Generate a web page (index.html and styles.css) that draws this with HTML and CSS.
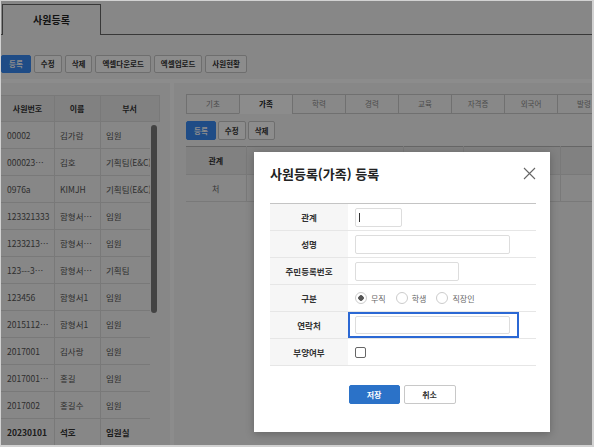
FILE: index.html
```html
<!DOCTYPE html>
<html lang="ko">
<head>
    <meta charset="UTF-8">
    <meta name="viewport" content="width=device-width, initial-scale=1.0">
    <title>사원등록</title>
    <link rel="stylesheet" href="styles.css">
</head>
<body>
    <div class="page-tabs">
        <div class="page-tab">사원등록</div>
    </div>

    <div class="toolbar">
        <button class="btn btn-primary">등록</button>
        <button class="btn">수정</button>
        <button class="btn">삭제</button>
        <button class="btn">엑셀다운로드</button>
        <button class="btn">엑셀업로드</button>
        <button class="btn">사원현황</button>
    </div>

    <div class="main">
        <!-- 사원 목록 -->
        <div class="emp-list">
            <div class="grid-head">
                <div class="gcell c-no">사원번호</div>
                <div class="gcell c-name">이름</div>
                <div class="gcell c-dept">부서</div>
            </div>
            <div class="grid-body">
                <div class="rows">
                    <div class="grow"><div class="gcell c-no">00002</div><div class="gcell c-name">김가람</div><div class="gcell c-dept">임원</div></div>
                    <div class="grow"><div class="gcell c-no">000023…</div><div class="gcell c-name">김호</div><div class="gcell c-dept">기획팀(E&amp;C)</div></div>
                    <div class="grow"><div class="gcell c-no">0976a</div><div class="gcell c-name">KIMJH</div><div class="gcell c-dept">기획팀(E&amp;C)</div></div>
                    <div class="grow"><div class="gcell c-no">123321333</div><div class="gcell c-name">함형서…</div><div class="gcell c-dept">임원</div></div>
                    <div class="grow"><div class="gcell c-no">1233213…</div><div class="gcell c-name">함형서…</div><div class="gcell c-dept">임원</div></div>
                    <div class="grow"><div class="gcell c-no">123---3…</div><div class="gcell c-name">함형서…</div><div class="gcell c-dept">기획팀</div></div>
                    <div class="grow"><div class="gcell c-no">123456</div><div class="gcell c-name">함형서1</div><div class="gcell c-dept">임원</div></div>
                    <div class="grow"><div class="gcell c-no">2015112…</div><div class="gcell c-name">함형서1</div><div class="gcell c-dept">임원</div></div>
                    <div class="grow"><div class="gcell c-no">2017001</div><div class="gcell c-name">김사랑</div><div class="gcell c-dept">임원</div></div>
                    <div class="grow"><div class="gcell c-no">2017001…</div><div class="gcell c-name">홍길</div><div class="gcell c-dept">임원</div></div>
                    <div class="grow"><div class="gcell c-no">2017002</div><div class="gcell c-name">홍길수</div><div class="gcell c-dept">임원</div></div>
                    <div class="grow selected"><div class="gcell c-no">20230101</div><div class="gcell c-name">석호</div><div class="gcell c-dept">임원실</div></div>
                </div>
                <div class="scroll-track"><div class="scroll-thumb"></div></div>
            </div>
        </div>

        <!-- 상세 -->
        <div class="detail">
            <div class="sub-tabs">
                <div class="sub-tab">기초</div>
                <div class="sub-tab active">가족</div>
                <div class="sub-tab">학력</div>
                <div class="sub-tab">경력</div>
                <div class="sub-tab">교육</div>
                <div class="sub-tab">자격증</div>
                <div class="sub-tab">외국어</div>
                <div class="sub-tab">발령</div>
            </div>

            <div class="toolbar sub-toolbar">
                <button class="btn btn-primary">등록</button>
                <button class="btn">수정</button>
                <button class="btn">삭제</button>
            </div>

            <table class="family-grid">
                <colgroup>
                    <col style="width:60px">
                    <col style="width:157px">
                    <col style="width:60px">
                    <col style="width:97px">
                    <col style="width:120px">
                </colgroup>
                <thead>
                    <tr><th>관계</th><th></th><th></th><th></th><th></th></tr>
                </thead>
                <tbody>
                    <tr><td>처</td><td></td><td></td><td></td><td></td></tr>
                </tbody>
            </table>
        </div>
    </div>

    <div class="dim"></div>

    <div class="modal">
        <div class="modal-head">
            <h2 class="modal-title">사원등록(가족) 등록</h2>
            <button class="close-btn" type="button">
                <svg width="13" height="13" viewBox="0 0 13 13">
                    <path d="M1 1 L12 12 M12 1 L1 12" stroke="#666" stroke-width="1.1" fill="none"/>
                </svg>
            </button>
        </div>

        <div class="form-table">
            <div class="frow">
                <div class="flabel">관계</div>
                <div class="fvalue">
                    <span class="field"><input class="inp inp-xs" type="text"><i class="caret"></i></span>
                </div>
            </div>
            <div class="frow">
                <div class="flabel">성명</div>
                <div class="fvalue"><input class="inp inp-lg" type="text"></div>
            </div>
            <div class="frow">
                <div class="flabel">주민등록번호</div>
                <div class="fvalue"><input class="inp inp-md" type="text"></div>
            </div>
            <div class="frow">
                <div class="flabel">구분</div>
                <div class="fvalue">
                    <label class="radio"><input type="radio" name="gubun" checked><span>무직</span></label>
                    <label class="radio"><input type="radio" name="gubun"><span>학생</span></label>
                    <label class="radio"><input type="radio" name="gubun"><span>직장인</span></label>
                </div>
            </div>
            <div class="frow">
                <div class="flabel">연락처</div>
                <div class="fvalue no-pad">
                    <div class="focus-box"><input class="inp inp-lg inp-short" type="text"></div>
                </div>
            </div>
            <div class="frow">
                <div class="flabel">부양여부</div>
                <div class="fvalue"><input class="chk" type="checkbox"></div>
            </div>
        </div>

        <div class="modal-foot">
            <button class="btn btn-save">저장</button>
            <button class="btn btn-cancel">취소</button>
        </div>
    </div>
</body>
</html>
```

FILE: styles.css
```css
* {
    box-sizing: border-box;
}

body {
    margin: 0;
    width: 594px;
    height: 447px;
    border: solid #d2d2d2;
    border-width: 1px 2px 2px 1px;
    background: #f6f6f6;
    overflow: hidden;
    position: relative;
    font-family: "Noto Sans CJK KR", "Noto Sans", sans-serif;
    color: #333;
}

/* 상단 페이지 탭 */
.page-tabs {
    height: 34px;
    padding: 3px 0 0 1px;
    border-bottom: 1px solid #666;
}

.page-tab {
    width: 99px;
    height: 31px;
    border: 1px solid #666;
    border-bottom: none;
    background: #f6f6f6;
    font-size: 10px;
    font-weight: 700;
    text-align: center;
    line-height: 29px;
    color: #222;
}

/* 버튼 */
.toolbar {
    display: flex;
    gap: 3px;
    padding: 20px 0 6px 0;
}

.btn {
    height: 18px;
    padding: 0 6px;
    border: 1px solid #c8c8c8;
    border-radius: 2px;
    background: #fff;
    color: #333;
    font-family: inherit;
    font-size: 7.5px;
    font-weight: 700;
    line-height: 1;
    cursor: pointer;
}

.btn-primary {
    background: #3a8bf5;
    border-color: #3a8bf5;
    color: #fff;
    padding: 0 7px;
}

.main {
    display: flex;
    gap: 4px;
    padding-top: 4px;
    background: #fff;
    height: 366px;
}

/* 사원 목록 */
.emp-list {
    width: 169px;
    background: #f6f6f6;
    padding-top: 12px;
}

.grid-head {
    display: flex;
    width: 159px;
    height: 27px;
    background: #ececec;
    border-top: 1px solid #ddd;
    border-bottom: 1px solid #ddd;
}

.grid-head .gcell {
    justify-content: center;
    font-weight: 700;
    color: #333;
    font-size: 8px;
}

.gcell {
    display: flex;
    align-items: center;
    border-right: 1px solid #ddd;
    padding: 0 6px;
    white-space: nowrap;
    overflow: hidden;
    flex-shrink: 0;
    font-size: 8.5px;
    color: #555;
}

.c-no { width: 54px; }
.c-name { width: 46px; padding-left: 5px; }
.c-dept { width: 59px; padding-left: 5px; }

.grid-body {
    display: flex;
    width: 159px;
}

.rows {
    width: 149px;
    overflow: hidden;
}

.grow {
    display: flex;
    height: 27px;
    border-bottom: 1px solid #ddd;
}

.grow .c-dept {
    width: 60px;
    border-right: none;
}

.grow.selected .gcell {
    font-weight: 700;
    color: #333;
}

.scroll-track {
    width: 10px;
    padding: 3px 0 0 1px;
}

.scroll-thumb {
    width: 6px;
    height: 188px;
    border-radius: 3px;
    background: #7a7a7a;
}

/* 상세 */
.detail {
    flex: 1;
    background: #f6f6f6;
    padding: 11px 0 0 12px;
    overflow: hidden;
}

.sub-tabs {
    display: flex;
    width: 600px;
}

.sub-tab {
    width: 54px;
    height: 20px;
    flex-shrink: 0;
    margin-left: -1px;
    border: 1px solid #ccc;
    background: #f8f8f8;
    color: #8a8a8a;
    font-size: 7.5px;
    line-height: 18px;
    text-align: center;
}

.sub-tab:first-child {
    margin-left: 0;
}

.sub-tab.active {
    background: #fff;
    border-bottom-color: #fff;
    color: #222;
    font-weight: 700;
}

.sub-toolbar {
    gap: 2px;
    padding: 7px 0 0 0;
}

.sub-toolbar .btn {
    height: 19px;
}

.family-grid {
    margin-top: 6px;
    width: 494px;
    table-layout: fixed;
    border-collapse: collapse;
    border-top: 1px solid #bbb;
}

.family-grid th {
    height: 28px;
    background: #ececec;
    border-bottom: 1px solid #ddd;
    border-right: 1px solid #ddd;
    font-size: 8px;
    font-weight: 700;
    color: #333;
    padding: 0;
}

.family-grid td {
    height: 27px;
    border-bottom: 1px solid #ddd;
    border-right: 1px solid #ddd;
    font-size: 8px;
    color: #666;
    text-align: center;
    padding: 0;
}

/* 모달 */
.dim {
    position: absolute;
    inset: 0;
    background: rgba(0, 0, 0, 0.45);
}

.modal {
    position: absolute;
    left: 253px;
    top: 151px;
    width: 296px;
    height: 280px;
    background: #fff;
    box-shadow: 0 2px 8px rgba(0, 0, 0, 0.25);
}

.modal-head {
    display: flex;
    align-items: center;
    justify-content: space-between;
    height: 43px;
    padding: 0 14px 0 16px;
}

.modal-title {
    margin: 0;
    font-size: 13px;
    font-weight: 700;
    color: #222;
}

.close-btn {
    border: none;
    background: none;
    padding: 0;
    width: 13px;
    height: 13px;
    cursor: pointer;
}

.close-btn svg {
    display: block;
}

.form-table {
    margin: 8px 14px 0 16px;
    border-top: 1px solid #c4c4c4;
}

.frow {
    display: grid;
    grid-template-columns: 78px 1fr;
    height: 27px;
    border-bottom: 1px solid #e6e6e6;
}

.flabel {
    display: flex;
    align-items: center;
    justify-content: center;
    background: #f6f6f6;
    font-size: 8.5px;
    font-weight: 700;
    color: #333;
}

.fvalue {
    display: flex;
    align-items: center;
    padding-left: 7px;
}

.fvalue.no-pad {
    padding-left: 0;
}

.inp {
    height: 19px;
    border: 1px solid #ddd;
    border-radius: 2px;
    padding: 0 4px;
    font-family: inherit;
    font-size: 8px;
    outline: none;
    background: #fff;
}

.inp-xs { width: 47px; }
.inp-md { width: 104px; }
.inp-lg { width: 155px; }
.inp-short { height: 18px; }

.field {
    position: relative;
    display: inline-flex;
}

.caret {
    position: absolute;
    left: 4px;
    top: 5px;
    width: 1px;
    height: 9px;
    background: #333;
}

.focus-box {
    display: flex;
    align-items: center;
    height: 26px;
    padding: 0 7px 0 5px;
    border: 2px solid #2b68d4;
}

.radio {
    display: inline-flex;
    align-items: center;
    margin-right: 10px;
    font-size: 8px;
    color: #666;
}

.radio input {
    appearance: none;
    -webkit-appearance: none;
    width: 12px;
    height: 12px;
    margin: 0 4px 0 0;
    border: 1px solid #ccc;
    border-radius: 50%;
    background: #fff;
}

.radio input:checked {
    background: radial-gradient(circle, #555 0 2.5px, #fff 3px);
}

.chk {
    appearance: none;
    -webkit-appearance: none;
    width: 11px;
    height: 11px;
    margin: 0;
    border: 1px solid #666;
    border-radius: 2px;
    background: #fff;
}

.modal-foot {
    display: flex;
    justify-content: center;
    gap: 4px;
    margin-top: 19px;
}

.modal-foot .btn {
    height: 19px;
    font-size: 8px;
}

.btn-save {
    width: 51px;
    background: #2b72c8;
    border-color: #2b72c8;
    color: #fff;
}

.btn-cancel {
    width: 52px;
}
```
